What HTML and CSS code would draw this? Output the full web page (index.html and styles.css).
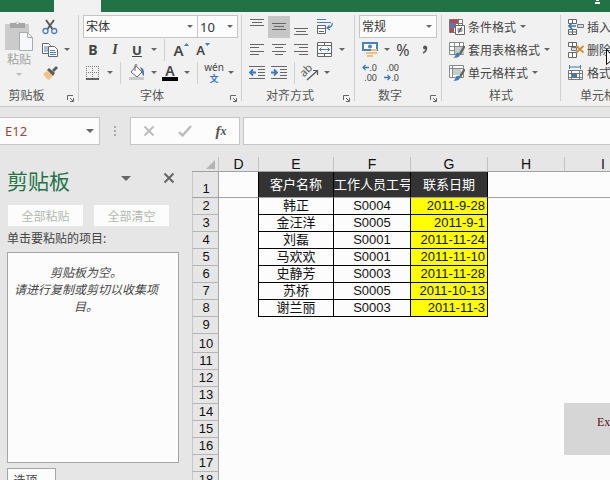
FILE: index.html
```
<!DOCTYPE html>
<html lang="zh-CN">
<head>
  <meta charset="UTF-8">
  <title>客户联系表</title>
  <link rel="stylesheet" href="styles.css">
</head>
<body>
  <header class="titlebar">
    <div class="active-tab"></div>
    <svg class="title-mark" width="6" height="8" viewBox="0 0 6 8"><path d="M1 4h3v1H1zM0 6h5v2H0z" fill="#fff"/></svg>
  </header>

  <!-- リボン -->
  <div class="ribbon">
    <section class="group group-clipboard">
      <div class="group-body clipboard-body">
        <button class="paste" type="button">
          <svg width="30" height="32" viewBox="0 0 30 32"><path d="M1 4h24v26H1z" fill="#cbcbcb"/><path d="M6 3h5a3 3 0 0 1 5 0h5v5H6z" fill="#a6a6a6"/><circle cx="13.500" cy="3" r="1.200" fill="#eee"/><path d="M15.500 12.500h8l5 5v13h-13z" fill="#f7f8fc" stroke="#aaa"/><path d="M23.500 12.500v5h5" fill="none" stroke="#aaa"/></svg>
          <span>粘贴</span>
          <span class="arrow pale"></span>
        </button>
        <div class="rows">
          <div class="row">
            <button class="tool" type="button" aria-label="剪切"><svg width="16" height="16" viewBox="0 0 16 16"><path d="M4 1l6.500 9M12 1L5.500 10" stroke="#5a5a5a" stroke-width="2" fill="none"/><circle cx="3.500" cy="12" r="2.500" fill="none" stroke="#4a7ebb" stroke-width="1.300"/><circle cx="12.200" cy="12" r="2.500" fill="none" stroke="#4a7ebb" stroke-width="1.300"/></svg></button>
          </div>
          <div class="row">
            <button class="tool" type="button" aria-label="复制"><svg width="16" height="16" viewBox="0 0 16 16"><path d="M.5 1.500h6l2 2v8h-8z" fill="#fff" stroke="#666"/><path d="M2 5h4M2 7h4M2 9h4" stroke="#4a7ebb"/><path d="M6.500 4.500h6l3 3v7h-9z" fill="#fff" stroke="#666"/><path d="M8 8.500h5M8 10.500h6M8 12.500h6" stroke="#4a7ebb"/></svg></button>
            <span class="arrow-box"><span class="arrow"></span></span>
          </div>
          <div class="row">
            <button class="tool" type="button" aria-label="格式刷"><svg width="16" height="16" viewBox="0 0 16 16"><path d="M1 9l4-3 6 5-4 4-2-1z" fill="#f2c281"/><path d="M5 5l2-2 6 5-2 3z" fill="#5c5c5c"/><path d="M10 5l4-4 2 2-4 4z" fill="#5c5c5c"/></svg></button>
          </div>
        </div>
      </div>
      <div class="group-label"><span>剪贴板</span><svg class="launcher" width="7" height="7" viewBox="0 0 7 7"><path d="M.5 5V.5H6M3 3l3 3M6.500 3v3.500H3" fill="none" stroke="#666"/></svg></div>
    </section>

    <section class="group group-font">
      <div class="group-body">
        <div class="row">
          <span class="combo font-name"><select aria-label="字体"><option>宋体</option></select><span class="arrow"></span></span>
          <span class="combo font-size"><select aria-label="字号"><option>10</option></select><span class="arrow"></span></span>
        </div>
        <div class="row">
          <button class="tool bold" type="button">B</button>
          <button class="tool italic" type="button">I</button>
          <button class="tool underline" type="button">U</button>
          <span class="arrow-box"><span class="arrow"></span></span>
          <span class="sep"></span>
          <button class="tool grow" type="button" aria-label="增大字号">A<svg width="5" height="3" viewBox="0 0 5 3"><path d="M0 3l2.500-3L5 3z" fill="#3d7ab8"/></svg></button>
          <button class="tool shrink" type="button" aria-label="减小字号">A<svg width="5" height="3" viewBox="0 0 5 3"><path d="M0 0h5L2.500 3z" fill="#3d7ab8"/></svg></button>
        </div>
        <div class="row">
          <button class="tool" type="button" aria-label="边框"><svg width="14" height="14" viewBox="0 0 14 14"><path d="M0 .5h13M0 6.500h13M.5 0v13M6.500 0v13M12.500 0v13" stroke="#777" stroke-dasharray="1 1"/><path d="M0 13h13" stroke="#333" stroke-width="1.500"/></svg></button>
          <span class="arrow-box"><span class="arrow"></span></span>
          <span class="sep"></span>
          <button class="tool" type="button" aria-label="填充颜色"><svg width="16" height="17" viewBox="0 0 16 17"><path d="M7 2l6 6-5 5-6-5z" fill="#fff" stroke="#666"/><path d="M6 7V1.500a1 1 0 0 1 2 0" fill="none" stroke="#666"/><path d="M11 3q5 1 4 9-2-1-2-4z" fill="#3d7ab8"/><path d="M0 13h15v3H0z" fill="#c9c9c9"/></svg></button>
          <span class="arrow-box"><span class="arrow"></span></span>
          <button class="tool font-color" type="button" aria-label="字体颜色"><span>A</span></button>
          <span class="arrow-box"><span class="arrow"></span></span>
          <span class="sep"></span>
          <button class="tool pinyin" type="button"><span>wén</span><span class="pinyin-char">文</span></button>
          <span class="arrow-box"><span class="arrow"></span></span>
        </div>
      </div>
      <div class="group-label"><span>字体</span><svg class="launcher" width="7" height="7" viewBox="0 0 7 7"><path d="M.5 5V.5H6M3 3l3 3M6.500 3v3.500H3" fill="none" stroke="#666"/></svg></div>
    </section>

    <section class="group group-align">
      <div class="group-body">
        <div class="row">
          <button class="tool" type="button" aria-label="顶端对齐"><svg width="14" height="16" viewBox="0 0 14 16"><path d="M0 .5h14M2 3.500h10M0 6.500h14" stroke="#666"/></svg></button>
          <button class="tool selected" type="button" aria-label="垂直居中"><svg width="14" height="16" viewBox="0 0 14 16"><path d="M0 4.500h14M2 7.500h10M0 10.500h14" stroke="#666"/></svg></button>
          <button class="tool" type="button" aria-label="底端对齐"><svg width="14" height="16" viewBox="0 0 14 16"><path d="M0 9.500h14M2 12.500h10M0 15.500h14" stroke="#666"/></svg></button>
          <button class="tool spaced" type="button" aria-label="自动换行"><svg width="16" height="16" viewBox="0 0 16 16"><path d="M0 .5h9M0 3.500h14" stroke="#4a7ebb"/><path d="M.5 6.500h8v3h-8zM.5 9.500h8v5h-8zM2 12.500h5" fill="#fff" stroke="#666"/><path d="M15 4q1 4-5 5M12.500 6.500L10 9l3 2" fill="none" stroke="#4a7ebb" stroke-width="1.300"/></svg></button>
        </div>
        <div class="row">
          <button class="tool" type="button" aria-label="左对齐"><svg width="14" height="12" viewBox="0 0 14 12"><path d="M0 .5h14M0 3.500h9M0 7.500h14M0 10.500h9" stroke="#666"/></svg></button>
          <button class="tool" type="button" aria-label="居中"><svg width="14" height="12" viewBox="0 0 14 12"><path d="M0 .5h14M3 3.500h8M0 7.500h14M3 10.500h8" stroke="#666"/></svg></button>
          <button class="tool" type="button" aria-label="右对齐"><svg width="14" height="12" viewBox="0 0 14 12"><path d="M0 .5h14M5 3.500h9M0 7.500h14M5 10.500h9" stroke="#666"/></svg></button>
          <button class="tool spaced" type="button" aria-label="合并后居中"><svg width="16" height="16" viewBox="0 0 16 16"><path d="M.5.5h14v14H.5zM.5 3.500h14M.5 11.500h14M7.500.5v3M7.500 11.500v3" fill="#fff" stroke="#666"/><path d="M2 7.500h11M4.500 5.500l-2 2 2 2M10.500 5.500l2 2-2 2" fill="none" stroke="#4a7ebb"/></svg></button>
          <span class="arrow-box"><span class="arrow"></span></span>
        </div>
        <div class="row">
          <button class="tool" type="button" aria-label="减少缩进"><svg width="16" height="13" viewBox="0 0 16 13"><path d="M0 .5h16M9 3.500h7M9 6.500h7M9 9.500h7M0 12.500h16" stroke="#666"/><path d="M7 6.500H1M4 3.500l-3 3 3 3" fill="none" stroke="#3d7ab8" stroke-width="1.800"/></svg></button>
          <button class="tool" type="button" aria-label="增加缩进"><svg width="16" height="13" viewBox="0 0 16 13"><path d="M0 .5h16M9 3.500h7M9 6.500h7M9 9.500h7M0 12.500h16" stroke="#666"/><path d="M0 6.500h6M3 3.500l3 3-3 3" fill="none" stroke="#3d7ab8" stroke-width="1.800"/></svg></button>
          <span class="sep narrow"></span>
          <button class="tool orient" type="button" aria-label="方向"><svg width="18" height="18" viewBox="0 0 18 18"><text x="1" y="11" font-size="11" fill="#555" transform="rotate(-45 5 10)">ab</text><path d="M6 16l10-9M12 6.500h4.500V11" fill="none" stroke="#555" stroke-width="1.200"/></svg></button>
          <span class="arrow-box"><span class="arrow"></span></span>
        </div>
      </div>
      <div class="group-label"><span>对齐方式</span><svg class="launcher" width="7" height="7" viewBox="0 0 7 7"><path d="M.5 5V.5H6M3 3l3 3M6.500 3v3.500H3" fill="none" stroke="#666"/></svg></div>
    </section>

    <section class="group group-number">
      <div class="group-body">
        <div class="row">
          <span class="combo number-format"><select aria-label="数字格式"><option>常规</option></select><span class="arrow"></span></span>
        </div>
        <div class="row">
          <button class="tool" type="button" aria-label="会计数字格式"><svg width="16" height="16" viewBox="0 0 16 16"><path d="M1 1h14v7H1z" fill="#fff" stroke="#4a84bb" stroke-width="2"/><circle cx="8" cy="4.500" r="2" fill="#4a84bb"/><path d="M9 7h6v2H9zM9 10h6v2H9zM4 10h5v2H4zM5 13h6v2H5z" fill="#f0c07c"/></svg></button>
          <span class="arrow-box"><span class="arrow"></span></span>
          <button class="tool percent" type="button">%</button>
          <button class="tool" type="button" aria-label="千位分隔样式"><svg width="6" height="9" viewBox="0 0 6 9"><circle cx="3" cy="2.500" r="2" fill="#555"/><path d="M4.500 2q.5 4-3.500 6" fill="none" stroke="#555" stroke-width="1.400"/></svg></button>
        </div>
        <div class="row">
          <button class="tool decimal" type="button" aria-label="增加小数位数"><span><svg width="7" height="7" viewBox="0 0 7 7"><path d="M7 3.500H1M3.500 1L1 3.500 3.500 6" fill="none" stroke="#3d7ab8" stroke-width="1.300"/></svg>.0</span><span>.00</span></button>
          <button class="tool decimal" type="button" aria-label="减少小数位数"><span>.00</span><span><svg width="7" height="7" viewBox="0 0 7 7"><path d="M0 3.500h6M3.500 1L6 3.500 3.500 6" fill="none" stroke="#3d7ab8" stroke-width="1.300"/></svg>.0</span></button>
        </div>
      </div>
      <div class="group-label"><span>数字</span><svg class="launcher" width="7" height="7" viewBox="0 0 7 7"><path d="M.5 5V.5H6M3 3l3 3M6.500 3v3.500H3" fill="none" stroke="#666"/></svg></div>
    </section>

    <section class="group group-styles">
      <div class="group-body">
        <button class="wide-tool" type="button"><svg width="16" height="16" viewBox="0 0 16 16"><path d="M.5.5h13v13H.5zM.5 4.500h13M.5 8.500h13M9.500.5v13" fill="#fff" stroke="#777"/><path d="M1 1h8v3H1zM1 9h4v4H1z" fill="#b8484f"/><path d="M1 5h6v3H1z" fill="#4a7ebb"/><path d="M6.500 6.500h9v9h-9z" fill="#fff" stroke="#666"/><path d="M8.500 10h5M8.500 12h5M12.500 8l-3 6" stroke="#444"/></svg>条件格式<span class="arrow"></span></button>
        <button class="wide-tool" type="button"><svg width="16" height="16" viewBox="0 0 16 16"><path d="M.5.5h14v12H.5zM.5 4.500h14M.5 8.500h14M5.500.5v12M10.500.5v12" fill="#fff" stroke="#888"/><path d="M6 5h9v7H6z" fill="#bfcfca"/><path d="M15.500 4L11 12" stroke="#666" stroke-width="2.500"/><path d="M4 15.500q2 0 3-4 3-2 4 1-1 4-7 3z" fill="#3d7ab8"/></svg>套用表格格式<span class="arrow"></span></button>
        <button class="wide-tool" type="button"><svg width="16" height="16" viewBox="0 0 16 16"><path d="M.5.5h14v12H.5zM.5 3.500h14M3.500.5v12" fill="#fff" stroke="#888"/><path d="M4 4h8v6H4z" fill="#bfcfca"/><path d="M15.500 4L11 12" stroke="#666" stroke-width="2.500"/><path d="M4 15.500q2 0 3-4 3-2 4 1-1 4-7 3z" fill="#3d7ab8"/></svg>单元格样式<span class="arrow"></span></button>
      </div>
      <div class="group-label"><span>样式</span></div>
    </section>

    <section class="group group-cells">
      <div class="group-body">
        <button class="wide-tool" type="button"><svg width="16" height="16" viewBox="0 0 16 16"><path d="M.5.5h8v4h-8zM4.500.5v4M.5 10.500h8v5h-8zM4.500 10.500v5M.5 13h8" fill="#fff" stroke="#666"/><path d="M9.500 5.500h6v3h-6z" fill="#cfe0ee" stroke="#777"/><path d="M8 7H1M4 4L1 7l3 3" fill="none" stroke="#3d7ab8" stroke-width="1.700"/></svg>插入<span class="arrow"></span></button>
        <button class="wide-tool" type="button"><svg width="16" height="16" viewBox="0 0 16 16"><path d="M.5.5h8v4h-8zM4.500.5v4M.5 10.500h8v5h-8zM4.500 10.500v5" fill="#fff" stroke="#666"/><path d="M3.500 5.500h5v3h-5z" fill="#cfe0ee" stroke="#777"/><path d="M8.500 4l7 6.500M15.500 4l-7 6.500" stroke="#d08a35" stroke-width="1.800"/></svg>删除<span class="arrow"></span></button>
        <button class="wide-tool" type="button"><svg width="16" height="16" viewBox="0 0 16 16"><path d="M1 2h12M1.500 0v4M12.500 0v4" stroke="#3d7ab8"/><path d="M.5 5.500h14v9H.5zM.5 8.500h14M.5 12.500h14M3.500 5.500v9M11.500 5.500v9" fill="#fff" stroke="#777"/><path d="M4 8h5v4H4z" fill="#3d7ab8"/></svg>格式<span class="arrow"></span></button>
      </div>
      <div class="group-label">单元格</div>
    </section>
  </div>

  <!-- 数式バー -->
  <div class="formula-bar">
    <div class="name-box"><input type="text" value="E12" aria-label="名称框"><span class="arrow big"></span></div>
    <svg class="grip" width="2" height="11" viewBox="0 0 2 11"><path d="M0 0h2v2H0zM0 4h2v2H0zM0 8h2v2H0z" fill="#aaa"/></svg>
    <div class="formula-buttons">
      <button type="button" aria-label="取消"><svg width="12" height="12" viewBox="0 0 12 12"><path d="M1.500 1.500l9 9M10.500 1.500l-9 9" stroke="#bbb" stroke-width="1.800"/></svg></button>
      <button type="button" aria-label="输入"><svg width="14" height="12" viewBox="0 0 14 12"><path d="M1 7l3.500 3.500L13 1" fill="none" stroke="#bbb" stroke-width="2.400"/></svg></button>
      <button class="fx" type="button">f<small>x</small></button>
    </div>
    <input class="formula" type="text" aria-label="编辑栏">
  </div>

  <main class="workspace">
    <aside class="pane">
      <div class="pane-head">
        <h2>剪贴板</h2>
        <span class="arrow big"></span>
        <button class="close" type="button" aria-label="关闭"><svg width="12" height="12" viewBox="0 0 12 12"><path d="M1.500 1.500l9 9M10.500 1.500l-9 9" stroke="#666" stroke-width="2"/></svg></button>
      </div>
      <div class="pane-buttons">
        <button type="button" disabled>全部粘贴</button>
        <button type="button" disabled>全部清空</button>
      </div>
      <p class="pane-hint">单击要粘贴的项目:</p>
      <div class="pane-list">剪贴板为空。<br>请进行复制或剪切以收集项目。</div>
      <button class="options" type="button">选项</button>
    </aside>

    <div class="sheet">
      <table>
        <colgroup>
          <col class="col-num"><col class="col-d"><col class="col-e"><col class="col"><col class="col"><col class="col"><col class="col">
        </colgroup>
        <thead>
          <tr><th class="corner"><svg width="9" height="9" viewBox="0 0 9 9"><path d="M9 0v9H0z" fill="#b4b4b4"/></svg></th><th>D</th><th>E</th><th>F</th><th>G</th><th>H</th><th>I</th></tr>
        </thead>
        <tbody>
          <tr class="frozen"><th>1</th><td class="edge"></td><td class="title">客户名称</td><td class="title">工作人员工号</td><td class="title">联系日期</td><td></td><td></td></tr>
          <tr class="data"><th>2</th><td class="edge"></td><td>韩正</td><td>S0004</td><td class="date">2011-9-28</td></tr>
          <tr class="data"><th>3</th><td class="edge"></td><td>金汪洋</td><td>S0005</td><td class="date">2011-9-1</td></tr>
          <tr class="data"><th>4</th><td class="edge"></td><td>刘磊</td><td>S0001</td><td class="date">2011-11-24</td></tr>
          <tr class="data"><th>5</th><td class="edge"></td><td>马欢欢</td><td>S0001</td><td class="date">2011-11-10</td></tr>
          <tr class="data"><th>6</th><td class="edge"></td><td>史静芳</td><td>S0003</td><td class="date">2011-11-28</td></tr>
          <tr class="data"><th>7</th><td class="edge"></td><td>苏桥</td><td>S0005</td><td class="date">2011-10-13</td></tr>
          <tr class="data"><th>8</th><td class="edge"></td><td>谢兰丽</td><td>S0003</td><td class="date">2011-11-3</td></tr>
          <tr><th>9</th></tr>
          <tr class="tall"><th>10</th></tr>
          <tr><th>11</th></tr>
          <tr><th>12</th></tr>
          <tr><th>13</th></tr>
          <tr><th>14</th></tr>
          <tr><th>15</th></tr>
          <tr><th>16</th></tr>
          <tr><th>17</th></tr>
          <tr><th>18</th></tr>
        </tbody>
      </table>
      <div class="watermark">Ex</div>
    </div>
  </main>

  <svg class="cursor" width="12" height="20" viewBox="0 0 12 20"><path d="M.5.5v15l3.500-3 2.500 6 2-1-2.500-5.500h5z" fill="#fff" stroke="#000"/></svg>
</body>
</html>
```
FILE: styles.css
```
* {
  box-sizing: border-box;
}
body {
  margin: 0;
  height: 100vh;
  overflow: hidden;
  display: flex;
  flex-direction: column;
  position: relative;
  background-color: #e6e6e6;
  color: #444;
  font-family: "Noto Sans", "Noto Sans CJK SC", sans-serif;
  font-size: 12px;
}
button, input, select {
  font: inherit;
  color: inherit;
  border: none;
  border-radius: 0;
  background: none;
  padding: 0;
  margin: 0;
}
svg {
  display: block;
  flex: none;
}

/* タイトルバー */
.titlebar {
  flex: none;
  height: 12px;
  display: flex;
  justify-content: space-between;
  padding: 0 9px 0 54px;
  background-color: #217346;
}
.active-tab {
  width: 47px;
  background-color: #f1f1f1;
}
.title-mark {
  margin-top: -4px;
}

/* リボン */
.ribbon {
  flex: none;
  display: flex;
  height: 95px;
  padding-top: 3px;
  background-color: #f1f1f1;
  border-bottom: 1px solid #c8c8c8;
  overflow: hidden;
}
.group {
  flex: none;
  height: 86px;
  border-right: 1px solid #cfd0d2;
}
.group-clipboard {
  width: 79px;
}
.group-font {
  width: 163px;
}
.group-align {
  width: 113px;
}
.group-number {
  width: 87px;
}
.group-styles {
  width: 119px;
}
.group-cells {
  width: 80px;
}
.group-body {
  height: 69px;
  padding-left: 4px;
}
.group-font .group-body {
  padding-left: 3px;
}
.clipboard-body {
  display: flex;
}
.row {
  display: flex;
  align-items: center;
  height: 23px;
}
.group-label {
  display: flex;
  align-items: center;
  height: 22px;
  color: #555;
}
.group-label span {
  flex: 1;
  text-align: center;
}
.group-clipboard .launcher {
  margin-left: 14px;
}
.group-cells .group-label {
  padding-left: 19px;
}
.launcher {
  margin: 6px 4px 0 5px;
}
.tool {
  flex: none;
  width: 22px;
  height: 22px;
  display: flex;
  align-items: center;
  justify-content: center;
}
.selected {
  background-color: #c6c6c6;
}
.spaced {
  margin-left: 2px;
}
.arrow {
  flex: none;
  border: 3px solid transparent;
  border-top-color: #666;
  border-bottom: none;
}
.arrow.big {
  border-width: 4px;
  border-bottom: none;
}
.arrow.pale {
  border-top-color: #bbb;
}
.arrow-box {
  flex: none;
  width: 11px;
  display: flex;
  justify-content: center;
}
.sep {
  flex: none;
  width: 11px;
  height: 22px;
  background: linear-gradient(#d0d0d0, #d0d0d0) center / 1px 100% no-repeat;
}
.sep.narrow {
  width: 9px;
}
.paste {
  width: 30px;
  margin-right: 5px;
  padding-top: 5px;
  display: flex;
  flex-direction: column;
  align-items: center;
  color: #a0a0a0;
}
.paste span {
  line-height: 16px;
}
.paste .arrow {
  margin-top: 5px;
}
.combo {
  display: grid;
  align-items: center;
  height: 23px;
  background-color: #fcfcfc;
  border: 1px solid #c3c5c8;
}
.combo select, .combo .arrow {
  grid-area: 1 / 1;
}
.combo select {
  appearance: none;
  width: 100%;
  padding-left: 2px;
  color: #333;
}
.combo .arrow {
  justify-self: end;
  margin-right: 4px;
}
.font-name {
  width: 115px;
  margin-left: 1px;
}
.font-size {
  width: 40px;
  border-left: none;
}
.font-size select {
  font-size: 13px;
}
.number-format {
  width: 78px;
}
.bold {
  font-size: 14px;
  font-weight: bold;
}
.italic {
  font-size: 14px;
  font-weight: bold;
  font-style: italic;
  font-family: "Liberation Serif", serif;
}
.underline {
  font-size: 13px;
  font-weight: bold;
  text-decoration: underline;
}
.grow, .shrink {
  align-items: flex-start;
  font-size: 15px;
  font-weight: 600;
  line-height: 22px;
}
.shrink {
  font-size: 13px;
}
.grow svg, .shrink svg {
  margin-top: 4px;
}
.font-color span {
  width: 16px;
  height: 17px;
  border-bottom: 4px solid #000;
  font-size: 14px;
  font-weight: 600;
  line-height: 13px;
}
.orient svg {
  overflow: visible;
}
.percent {
  font-size: 16px;
}
.pinyin {
  flex-direction: column;
  font-size: 10px;
  line-height: 11px;
}
.pinyin-char {
  color: #3d7ab8;
  font-size: 9px;
  font-weight: bold;
}
.decimal {
  flex-direction: column;
  align-items: flex-end;
  padding-right: 4px;
  font-size: 9px;
  line-height: 10px;
}
.decimal span {
  display: flex;
  align-items: center;
}
.wide-tool {
  display: flex;
  align-items: center;
  height: 23px;
  padding-left: 3px;
  white-space: nowrap;
}
.wide-tool svg {
  margin-right: 3px;
}
.wide-tool .arrow {
  margin-left: 4px;
}

/* 数式バー */
.formula-bar {
  flex: none;
  display: flex;
  align-items: center;
  height: 50px;
  padding-bottom: 2px;
}
.name-box, .formula-buttons, .formula {
  height: 28px;
  background-color: #fcfcfc;
  border: 1px solid #c6c6c6;
}
.name-box {
  width: 100px;
  display: flex;
  align-items: center;
  border-left: none;
  padding-right: 5px;
}
.name-box input {
  flex: 1;
  min-width: 0;
  padding-left: 5px;
  font-size: 13px;
  color: #9a4638;
}
.grip {
  margin: 0 14px;
}
.formula-buttons {
  width: 110px;
  display: flex;
}
.formula-buttons button {
  flex: 1;
  display: flex;
  align-items: center;
  justify-content: center;
}
.fx {
  color: #555;
  font-family: "Liberation Serif", serif;
  font-size: 15px;
  font-style: italic;
  font-weight: bold;
}
.fx small {
  font-size: 12px;
}
.formula {
  flex: 1;
  min-width: 0;
  margin-left: 3px;
  border-right: none;
}

/* クリップボード */
.workspace {
  flex: 1;
  min-height: 0;
  display: flex;
  overflow: hidden;
}
.pane {
  flex: none;
  width: 192px;
  padding: 8px 13px 0 7px;
}
.pane-head {
  display: flex;
  align-items: center;
  height: 32px;
}
.pane-head h2 {
  flex: 1;
  margin: 0;
  font-size: 21px;
  font-weight: normal;
  line-height: 32px;
  color: #217346;
}
.pane-head .arrow {
  margin: 0 32px 6px 0;
  border-width: 5px;
  border-bottom: none;
}
.close {
  margin: 0 4px 6px 0;
}
.pane-buttons {
  display: flex;
  gap: 11px;
  padding: 8px 10px 0 1px;
}
.pane-buttons button {
  flex: 1;
  height: 21px;
  background-color: #fcfcfc;
  color: #b3b8b0;
}
.pane-hint {
  margin: 5px 0;
  line-height: 16px;
}
.pane-list {
  height: 211px;
  padding: 11px 19px 0 5px;
  background-color: #fcfcfc;
  border: 1px solid #a6a6a6;
  font-style: italic;
  line-height: 17px;
  text-align: center;
}
.options {
  display: block;
  width: 49px;
  height: 24px;
  margin-top: 5px;
  padding-right: 12px;
  background-color: #fcfcfc;
  border: 1px solid #a6a6a6;
}

/* シート */
.sheet {
  flex: 1;
  min-width: 0;
  position: relative;
  overflow: hidden;
  background: linear-gradient(#e6e6e6, #e6e6e6) 0 0 / 100% 15px no-repeat #fcfcfc;
}
table {
  width: 450px;
  table-layout: fixed;
  border-collapse: separate;
  border-spacing: 0;
  font-family: "Liberation Sans", "Noto Sans CJK SC", sans-serif;
  font-size: 13px;
  line-height: 16px;
  color: #111;
}
.col-num {
  width: 27px;
}
.col-d {
  width: 40px;
}
.col-e {
  width: 75px;
}
.col {
  width: 77px;
}
th, td {
  height: 17px;
  padding: 0;
  white-space: nowrap;
  overflow: hidden;
  text-align: center;
}
th {
  background-color: #e6e6e6;
  border-right: 1px solid #a6a6a6;
  border-bottom: 1px solid #b5b5b5;
  font-weight: normal;
}
thead th {
  height: 15px;
  border-right-color: #c2c2c2;
  border-bottom-color: #a0a0a0;
  font-size: 14px;
  line-height: 14px;
}
tbody th {
  padding-left: 1px;
  border-left: 1px solid #c6c6c6;
}
.corner svg {
  margin: 0 3px 0 auto;
}
.frozen th, .frozen td {
  height: 26px;
  border-bottom: 1px solid #a0a0a0;
}
.frozen th {
  padding-top: 8px;
}
.tall th {
  height: 19px;
  padding-top: 2px;
}
.edge {
  border-right: 1px solid #000;
}
.frozen .title {
  background-color: #333;
  border-right: 1px solid #000;
  color: #fff;
}
.data td:not(.edge) {
  border-right: 1px solid #000;
  border-bottom: 1px solid #000;
}
.data .date {
  padding-right: 2px;
  background-color: #ff0;
  text-align: right;
}
.watermark {
  position: absolute;
  left: 372px;
  top: 246px;
  width: 77px;
  height: 52px;
  padding-left: 33px;
  background-color: #d6d6d6;
  color: #5c1020;
  font-family: "Liberation Serif", serif;
  font-size: 12px;
  line-height: 38px;
}

.cursor {
  position: absolute;
  left: 606px;
  top: 49px;
}
```
